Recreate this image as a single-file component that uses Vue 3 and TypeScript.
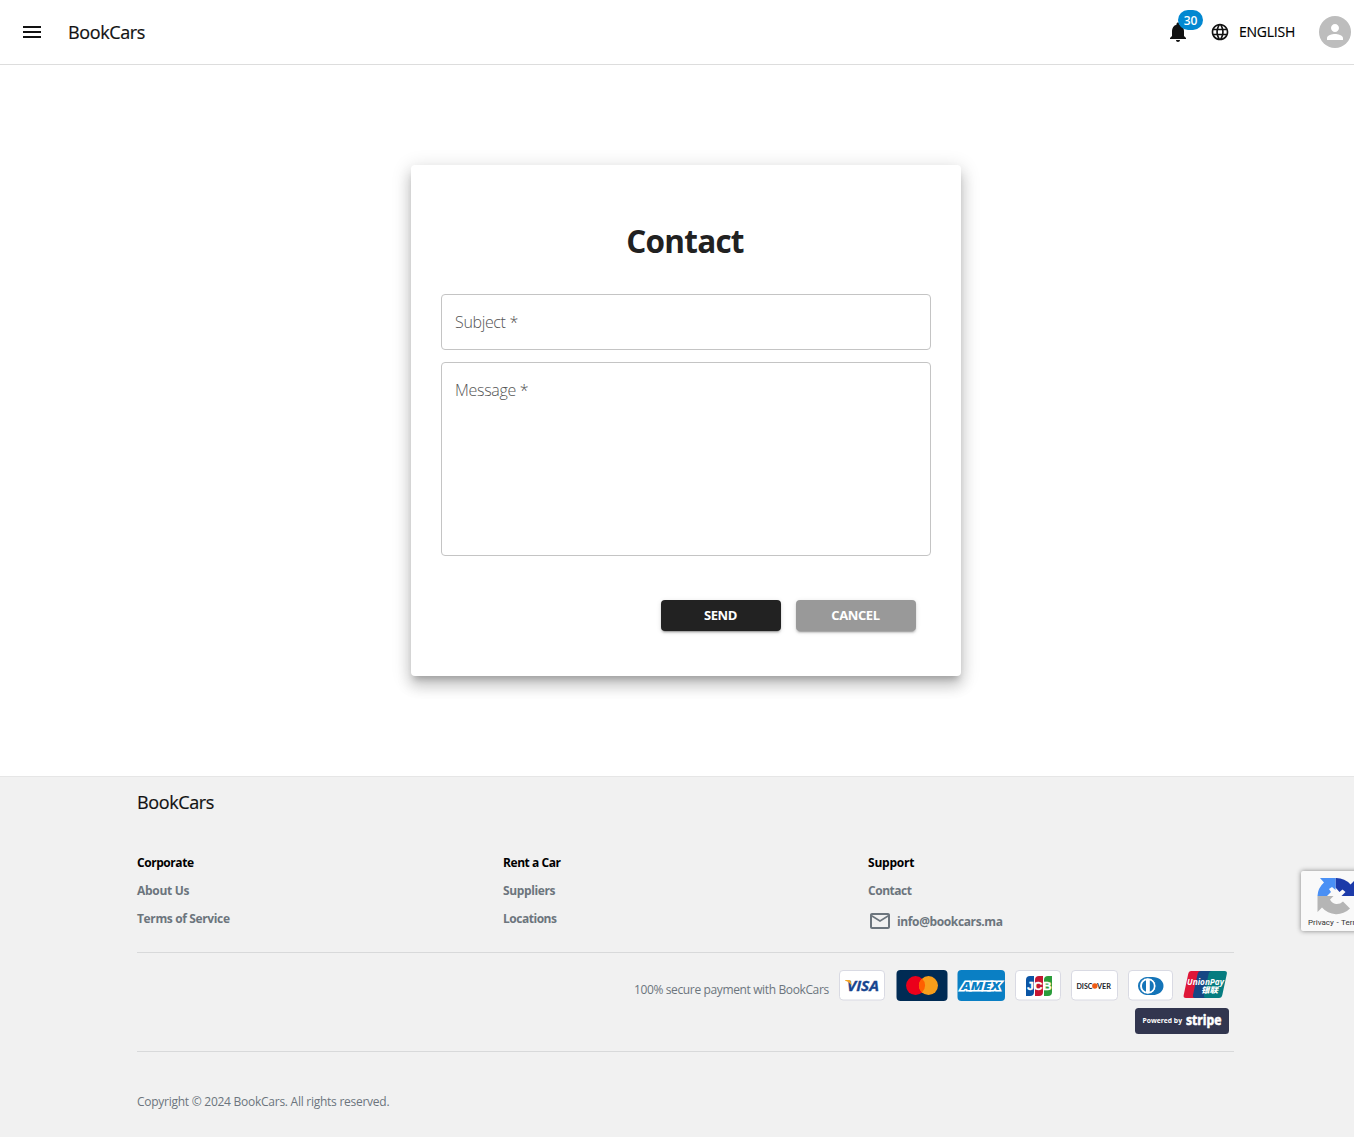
<script setup lang="ts">
interface FooterLink { label: string; width: number; mail?: boolean }
interface FooterColumn { title: string; width: number; links: FooterLink[] }

const columns: FooterColumn[] = [
  { title: 'Corporate', width: 57, links: [{ label: 'About Us', width: 52.5 }, { label: 'Terms of Service', width: 93 }] },
  { title: 'Rent a Car', width: 58, links: [{ label: 'Suppliers', width: 52.5 }, { label: 'Locations', width: 54 }] },
  { title: 'Support', width: 46.5, links: [{ label: 'Contact', width: 44 }, { label: 'info@bookcars.ma', width: 106, mail: true }] },
]
</script>

<template>
  <div class="viewport">
    <div class="page">
      <header class="header">
        <svg class="menu" viewBox="0 0 24 24"><path d="M3 18h18v-2H3zm0-5h18v-2H3zm0-7v2h18V6z" /></svg>
        <span class="brand">BookCars</span>
        <span class="spacer"></span>
        <span class="bell">
          <svg viewBox="0 0 24 24"><path d="M12 22c1.1 0 2-.9 2-2h-4c0 1.1.89 2 2 2m6-6v-5c0-3.07-1.64-5.64-4.5-6.32V4c0-.83-.67-1.5-1.5-1.5s-1.5.67-1.5 1.5v.68C7.63 5.36 6 7.92 6 11v5l-2 2v1h16v-1z" /></svg>
          <span class="badge">30</span>
        </span>
        <svg class="globe" viewBox="0 0 24 24"><path d="M11.99 2C6.47 2 2 6.48 2 12s4.47 10 9.99 10C17.52 22 22 17.52 22 12S17.52 2 11.99 2m6.93 6h-2.95c-.32-1.25-.78-2.45-1.38-3.56 1.84.63 3.37 1.91 4.33 3.56M12 4.04c.83 1.2 1.48 2.53 1.91 3.96h-3.82c.43-1.43 1.08-2.76 1.91-3.96M4.26 14C4.1 13.36 4 12.69 4 12s.1-1.36.26-2h3.38c-.08.66-.14 1.32-.14 2s.06 1.34.14 2zm.82 2h2.95c.32 1.25.78 2.45 1.38 3.56-1.84-.63-3.37-1.9-4.33-3.56m2.95-8H5.08c.96-1.66 2.49-2.93 4.33-3.56C8.81 5.55 8.35 6.75 8.03 8M12 19.96c-.83-1.2-1.48-2.53-1.91-3.96h3.82c-.43 1.43-1.08 2.76-1.91 3.96M14.34 14H9.66c-.09-.66-.16-1.32-.16-2s.07-1.35.16-2h4.68c.09.65.16 1.32.16 2s-.07 1.34-.16 2m.25 5.56c.6-1.11 1.06-2.31 1.38-3.56h2.95c-.96 1.65-2.49 2.93-4.33 3.56M16.36 14c.08-.66.14-1.32.14-2s-.06-1.34-.14-2h3.38c.16.64.26 1.31.26 2s-.1 1.36-.26 2z" /></svg>
        <span class="lang">ENGLISH</span>
        <span class="avatar"><svg viewBox="0 0 24 24"><path d="M12 12c2.21 0 4-1.79 4-4s-1.79-4-4-4-4 1.79-4 4 1.79 4 4 4m0 2c-2.67 0-8 1.34-8 4v2h16v-2c0-2.66-5.33-4-8-4" /></svg></span>
      </header>

      <main class="main">
        <form class="card" @submit.prevent>
          <h1><span>Contact</span></h1>
          <div class="field subject"><span>Subject *</span></div>
          <div class="field message"><span>Message *</span></div>
          <div class="actions">
            <button class="send" type="submit">SEND</button>
            <button class="cancel" type="button">CANCEL</button>
          </div>
        </form>
      </main>

      <footer class="footer">
        <div class="footer-brand">BookCars</div>
        <div class="columns">
          <section v-for="col in columns" :key="col.title">
            <svg class="label title" height="20" :width="col.width + 4"><text x="0" y="14" :textLength="col.width">{{ col.title }}</text></svg>
            <div v-for="link in col.links" :key="link.label" class="link" :class="{ mail: link.mail }">
              <svg v-if="link.mail" class="envelope" viewBox="0 0 24 24"><path d="M22 6c0-1.100-.9-2-2-2H4c-1.100 0-2 .9-2 2v12c0 1.100.9 2 2 2h16c1.100 0 2-.9 2-2zm-2 0-8 5-8-5zm0 12H4V8l8 5 8-5z" /></svg>
              <svg class="label" height="20" :width="link.width + 4"><text x="0" y="14" :textLength="link.width">{{ link.label }}</text></svg>
            </div>
          </section>
        </div>
        <div class="payment">
          <span class="secure">100% secure payment with BookCars</span>
          <svg class="cards" width="400" height="72" viewBox="834 964 400 72">
            <g fill="#fff" stroke="#d9dae3">
              <rect x="839.500" y="970.500" width="45" height="29.500" rx="3.500" />
              <rect x="1015.500" y="970.500" width="45" height="29.500" rx="3.500" />
              <rect x="1071.500" y="970.500" width="46" height="29.500" rx="3.500" />
              <rect x="1128.500" y="970.500" width="44" height="29.500" rx="3.500" />
            </g>
            <text x="847" y="991" class="visa" font-size="15" font-style="italic" fill="#17458f" stroke="#17458f" stroke-width=".3" textLength="32" lengthAdjust="spacingAndGlyphs">VISA</text>
            <path d="M845 980h4.200q1.200 0 1.500 1.200l1 4.200Q849 981.500 845 980.500z" fill="#f4a526" />

            <rect x="896.500" y="970" width="51" height="31" rx="4" fill="#002b54" />
            <circle cx="915.500" cy="985.600" r="9.500" fill="#eb001b" />
            <circle cx="928.500" cy="985.600" r="9.500" fill="#f79e1b" />
            <path d="M922 978.600a9.500 9.500 0 0 1 0 14a9.500 9.500 0 0 1 0-14" fill="#ff5f00" />

            <rect x="957.500" y="970" width="47.500" height="31" rx="4" fill="#0a7fc4" />
            <text x="961.500" y="990" class="amex" font-size="11" font-style="italic" fill="#0a7fc4" stroke="#fff" stroke-width="2.800" paint-order="stroke" textLength="38.500" lengthAdjust="spacingAndGlyphs">AMEX</text>

            <path d="M1026 980q0-4 4-4h4v16q0 4-4 4h-4z" fill="#0b55a5" />
            <path d="M1035 980q0-4 4-4h4v16q0 4-4 4h-4z" fill="#c51632" />
            <path d="M1044 980q0-4 4-4h4v16q0 4-4 4h-4z" fill="#2b9c3b" />
            <text x="1027" y="989.800" class="jcb" font-size="10.500" fill="#fff" stroke="#fff" stroke-width=".3" textLength="24.500" lengthAdjust="spacingAndGlyphs">JCB</text>

            <text x="1076.500" y="988.600" class="discover" font-size="7" fill="#22242a" textLength="16" lengthAdjust="spacingAndGlyphs">DISC</text>
            <circle cx="1094.800" cy="986" r="2.700" fill="#ef5a14" />
            <text x="1097" y="988.600" class="discover" font-size="7" fill="#22242a" textLength="14" lengthAdjust="spacingAndGlyphs">VER</text>

            <path d="M1147 977h5.500c6.500 0 11 4 11 8.900s-4.500 9.100-11 9.100h-5.500a9 9 0 0 1 0-18" fill="#1474b8" />
            <circle cx="1147.800" cy="986" r="8.300" fill="#fff" stroke="#1474b8" stroke-width="1" />
            <path d="M1146 980.200v11.600a6.200 6.200 0 0 1 0-11.600M1149.800 980.200v11.600a6.200 6.200 0 0 0 0-11.600" fill="#1474b8" />

            <path d="M1189 971h13l-6 27h-10q-3 0-2.300-3l4.500-21q.5-3 3-3" fill="#df1738" />
            <path d="M1201 971h13l-6 27h-13q-2.600 0-2-3l4.600-21q.6-3 3.400-3" fill="#164684" />
            <path d="M1213.500 971h11q3 0 2.300 3l-4.500 21q-.6 3-3.300 3h-13q-2.600 0-2-3l4.600-21q.6-3 3.400-3" fill="#067c80" />
            <text x="1187" y="985" class="visa" font-size="8.500" font-style="italic" fill="#fff" textLength="37" lengthAdjust="spacingAndGlyphs">UnionPay</text>
            <text x="1201" y="993.300" class="cjk" font-size="8" font-style="italic" fill="#fff" textLength="17" lengthAdjust="spacingAndGlyphs">银联</text>

            <rect x="1135" y="1008" width="94" height="26" rx="3.500" fill="#32364f" />
            <text x="1142.500" y="1023.400" class="visa" font-size="7.200" fill="#fff" textLength="39.500" lengthAdjust="spacingAndGlyphs">Powered by</text>
            <text x="1186" y="1025.200" class="visa" font-size="14.500" fill="#fff" stroke="#fff" stroke-width=".6" textLength="35.500" lengthAdjust="spacingAndGlyphs">stripe</text>
          </svg>
        </div>
        <div class="copyright">Copyright © 2024 BookCars. All rights reserved.</div>
      </footer>
    </div>

    <aside class="recaptcha">
      <svg width="40" height="40" viewBox="0 0 40 40">
        <path d="M39 20V4l-4.500 4.500A19 19 0 0 0 19.500 2v9.500L23.500 16l3-2.500 3 2.500-4 4z" fill="#1c3aa9" />
        <path d="M19.500 2H4l4 4.500A19 19 0 0 0 1.500 20h9.500l4-4-2-3 3-2 3.500 3z" fill="#4a90f5" />
        <path d="M1.500 20v16l4.500-4.500A19 19 0 0 0 34 32.500L27 25.500A9 9 0 0 1 20 28a8 8 0 0 1-6-4.500L17.500 20z" fill="#b5b5b5" />
      </svg>
      <span>Privacy - Terms</span>
    </aside>
  </div>
</template>

<style>
body { margin: 0; overflow: hidden; }
</style>

<style scoped>
.viewport { position: relative; width: 1354px; height: 1137px; overflow: hidden; background: #fff; font-family: "Open Sans", "Noto Sans", sans-serif; color: #121212; }
.page { width: 1371px; height: 1137px; display: flex; flex-direction: column; }
.header { box-sizing: border-box; height: 65px; border-bottom: 1px solid #ddd; display: flex; align-items: center; padding: 0 20px; flex: none; }
.header svg { fill: #121212; flex: none; }
.menu { width: 24px; height: 24px; }
.brand { margin-left: 24px; font-size: 18px; font-weight: 500; letter-spacing: -.38px; line-height: 26px; white-space: nowrap; -webkit-text-stroke: .2px #121212; }
.spacer { flex: 1; }
.bell { position: relative; display: block; width: 24px; height: 24px; margin-right: 20px; }
.bell svg { display: block; width: 24px; height: 24px; }
.badge { position: absolute; left: 12px; top: -10px; width: 25px; height: 20px; border-radius: 10px; background: #0288d1; color: #fff; font-size: 12px; line-height: 21px; font-weight: 600; text-align: center; }
.globe { width: 20px; height: 20px; }
.lang { margin-left: 9px; width: 56px; font-size: 14px; font-weight: 500; letter-spacing: -.25px; white-space: nowrap; line-height: 20px; color: #000; -webkit-text-stroke: .15px #000; }
.avatar { margin-left: 24px; width: 32px; height: 32px; border-radius: 50%; background: #bdbdbd; display: grid; place-items: center; flex: none; }
.avatar svg { width: 24px; height: 24px; fill: #fff; }

.main { height: 711px; flex: none; display: flex; justify-content: center; align-items: flex-start; padding-top: 100px; box-sizing: border-box; }
.card { box-sizing: border-box; width: 550px; height: 511px; padding: 54px 30px 0; margin-left: 1px; border-radius: 4px; background: #fff; box-shadow: 0 6px 6px -3px rgba(0,0,0,.2), 0 10px 14px 1px rgba(0,0,0,.14), 0 4px 18px 3px rgba(0,0,0,.12); }
h1 { margin: 0; height: 75px; padding-right: 2px; text-align: center; font-size: 31.5px; font-weight: 700; line-height: 43px; letter-spacing: -.75px; color: #212121; }
.field { box-sizing: border-box; border: 1px solid #c4c4c4; border-radius: 4px; padding: 16px 13px; font-size: 16px; font-weight: 300; line-height: 23px; color: #555; }
.subject { height: 56px; }
.message { height: 194px; margin-top: 12px; }
.subject span { letter-spacing: -.35px; }
.message span { letter-spacing: -.3px; }
.actions { display: flex; justify-content: flex-end; gap: 15px; margin: 44px 15px 0 0; }
button { width: 120px; height: 31px; padding: 0 1px 0 0; border: 0; border-radius: 4px; font: 700 13px/31px "Open Sans", sans-serif; letter-spacing: -.4px; color: #fff; box-shadow: 0 3px 1px -2px rgba(0,0,0,.2), 0 2px 2px rgba(0,0,0,.14), 0 1px 5px rgba(0,0,0,.12); }
.send { background: #222; }
.cancel { background: #999; }

.footer { box-sizing: border-box; flex: 1; background: #f1f1f1; border-top: 1px solid #e6e6e6; padding: 0 137px; }
.footer-brand { height: 76px; font-size: 18px; font-weight: 500; letter-spacing: -.38px; line-height: 26px; padding-top: 12px; box-sizing: border-box; -webkit-text-stroke: .2px #121212; }
.columns { display: grid; grid-template-columns: repeat(3, 365.67px); height: 99px; border-bottom: 1px solid #d8d9da; }
.columns section { display: flex; flex-direction: column; }
.label { display: block; overflow: visible; font-size: 12px; font-weight: 700; fill: #6c757d; }
.title { fill: #000; flex: none; }
.link { height: 20px; margin-top: 8px; display: flex; align-items: center; }
.mail { height: 24px; margin-top: 8px; }
.envelope { width: 24px; height: 24px; margin-right: 5px; fill: #6c757d; }
.mail .label { margin-top: 2px; }
.payment { height: 98px; border-bottom: 1px solid #d8d9da; display: flex; justify-content: flex-end; align-items: flex-start; }
.secure { margin-top: 27px; margin-right: 5px; width: 195px; font-size: 12px; line-height: 20px; color: #6c757d; white-space: nowrap; letter-spacing: -.37px; }
.cards { margin-top: 11px; flex: none; }
.visa { font-family: "Open Sans", sans-serif; font-weight: 700; }
.amex { font-family: "Open Sans", sans-serif; font-weight: 800; }
.jcb { font-family: "Liberation Sans", sans-serif; font-weight: 700; }
.discover { font-family: "Lato", sans-serif; font-weight: 700; }
.cjk { font-family: "Noto Sans CJK SC", sans-serif; font-weight: 900; }
.copyright { margin-top: 40px; font-size: 12px; line-height: 20px; color: #6c757d; letter-spacing: -.26px; }

.recaptcha { position: absolute; left: 1301px; top: 871px; width: 70px; height: 60px; border-radius: 2px; background: #f9f9f9; box-shadow: 0 0 5px gray; }
.recaptcha svg { display: block; margin: 5px 0 0 15px; }
.recaptcha span { display: block; margin-left: 7px; font: 8px/10px Roboto, sans-serif; color: #333; white-space: nowrap; margin-top: 2px; word-spacing: .6px; }
</style>
